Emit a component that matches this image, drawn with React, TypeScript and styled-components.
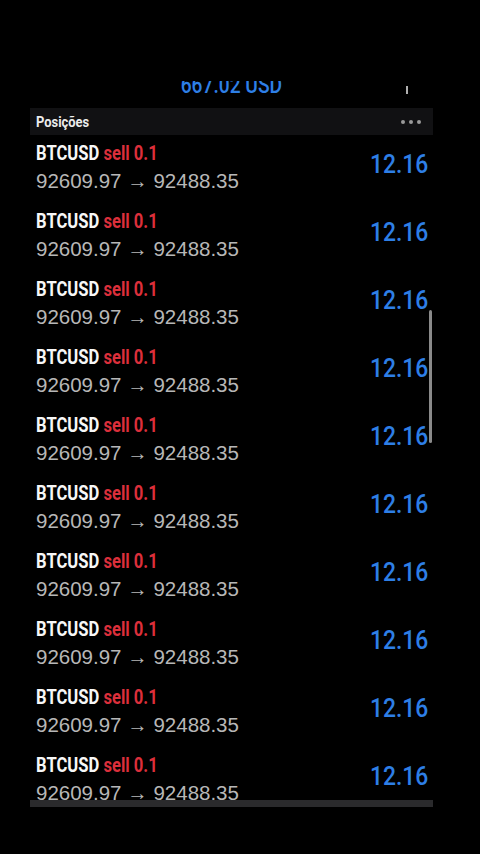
import styled, {createGlobalStyle} from 'styled-components'

const GlobalStyle = createGlobalStyle`
    html, body {
        margin: 0;
        padding: 0;
        background: #000000;
    }
    body {
        font-family: 'Liberation Sans', Arial, sans-serif;
        width: 480px;
        height: 854px;
        overflow: hidden;
    }
`

const Screen = styled.div`
    width: 403px;
    height: 854px;
    margin-left: 30px;
    background: #000000;
    display: flex;
    flex-direction: column;
`
const TopSpace = styled.div`
    height: 81px;
`
const SummaryClip = styled.div`
    height: 13px;
    overflow: hidden;
    display: grid;
    grid-template-columns: 1fr auto 1fr;
    grid-template-rows: 13px;
`
const Total = styled.div`
    grid-column: 2;
    align-self: start;
    font-family: Roboto, 'Liberation Sans', sans-serif;
    font-weight: 500;
    font-size: 24px;
    line-height: 8px;
    color: #2e7fe6;
    white-space: nowrap;
    transform: scaleX(0.8);
`
const Mark = styled.div`
    grid-column: 3;
    align-self: end;
    justify-self: end;
    width: 2px;
    height: 8px;
    margin-right: 25px;
    background: #b0b0b0;
`
const Header = styled.div`
    margin-top: 14px;
    height: 27px;
    background: #111113;
    padding: 0 12px 0 6px;
    display: flex;
    align-items: center;
    justify-content: space-between;
`
const HeaderTitle = styled.span`
    display: inline-block;
    font-family: Roboto, 'Liberation Sans', sans-serif;
    font-weight: 700;
    font-size: 15px;
    color: #ececec;
    transform: scaleX(0.86);
    transform-origin: left center;
`
const Dots = styled.div`
    display: flex;
    gap: 4px;
    span {
        width: 4px;
        height: 4px;
        border-radius: 50%;
        background: #9a9a9a;
    }
`
const List = styled.div`
    position: relative;
    height: 665px;
    overflow: hidden;
`
const Row = styled.div`
    height: 68px;
    padding: 0 5px 0 6px;
    display: flex;
    justify-content: space-between;
    align-items: flex-start;
`
const Info = styled.div`
    padding-top: 6px;
`
const Title = styled.div`
    font-family: Roboto, 'Liberation Sans', sans-serif;
    font-weight: 700;
    font-size: 20px;
    line-height: 24px;
    color: #f7f7f7;
    white-space: nowrap;
    transform: scaleX(0.83);
    transform-origin: left center;
    span {
        color: #dc2f3b;
    }
`
const Prices = styled.div`
    margin-top: 4px;
    font-size: 20.5px;
    line-height: 24px;
    color: #b7b7b7;
    white-space: nowrap;
`
const Value = styled.div`
    margin-top: 14px;
    font-family: Roboto, 'Liberation Sans', sans-serif;
    font-weight: 500;
    font-size: 26px;
    line-height: 30px;
    color: #2e7fe6;
    transform: scaleX(0.88);
    transform-origin: right center;
`
const ScrollThumb = styled.div`
    position: absolute;
    left: 399px;
    top: 175px;
    width: 3px;
    height: 133px;
    border-radius: 2px;
    background: #8a8a8a;
`
const Footer = styled.div`
    height: 7px;
    background: #2a2a2c;
`

const positions = Array.from({length: 10}, () => ({
    symbol: 'BTCUSD',
    side: 'sell',
    volume: '0.1',
    open: '92609.97',
    current: '92488.35',
    profit: '12.16',
}))

function App() {
    return (
        <>
            <GlobalStyle />
            <Screen>
                <TopSpace />
                <SummaryClip>
                    <Total>667.02 USD</Total>
                    <Mark />
                </SummaryClip>
                <Header>
                    <HeaderTitle>Posições</HeaderTitle>
                    <Dots>
                        <span />
                        <span />
                        <span />
                    </Dots>
                </Header>
                <List>
                    {positions.map((p, i) => (
                        <Row key={i}>
                            <Info>
                                <Title>
                                    {p.symbol} <span>{p.side} {p.volume}</span>
                                </Title>
                                <Prices>
                                    {p.open} → {p.current}
                                </Prices>
                            </Info>
                            <Value>{p.profit}</Value>
                        </Row>
                    ))}
                    <ScrollThumb />
                </List>
                <Footer />
            </Screen>
        </>
    )
}
export default App
